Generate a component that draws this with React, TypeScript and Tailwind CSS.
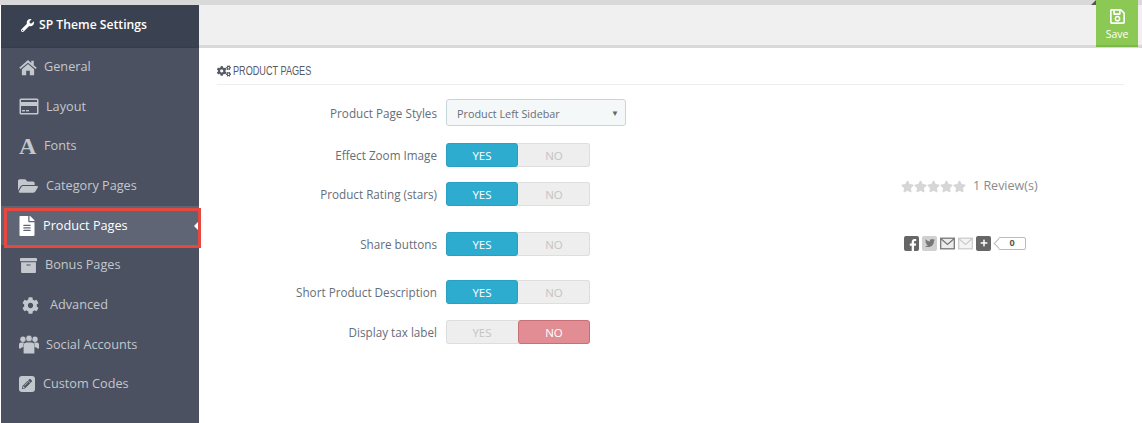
import React from "react";
import { FaArchive, FaCog, FaCogs, FaFacebookF, FaFileAlt, FaFolderOpen, FaPencilAlt, FaPlus, FaRegSave, FaStar, FaTwitter, FaWrench } from "react-icons/fa";

type NavItem = {
  label: string;
  icon: React.ReactNode;
  iconBox: string;
  rowClass: string;
  active?: boolean;
};

function HomeIcon() {
  return (
    <svg width="18" height="17" viewBox="0 0 20 18" fill="currentColor" className="ml-[18px]">
      <path d="M10 0.8 L0.3 9.3 L1.6 10.8 L10 3.6 L18.4 10.8 L19.7 9.3 L16.4 6.4 V1.6 H13.6 V4 Z" />
      <path d="M10 5.2 L3.2 11 V17.6 H8 V12.6 H12 V17.6 H16.8 V11 Z" />
    </svg>
  );
}

function CardIcon() {
  return (
    <svg width="20" height="17" viewBox="0 0 20 17" fill="currentColor" className="ml-[18px]">
      <path fillRule="evenodd" d="M2 0.5 H18 Q19.5 0.5 19.5 2 V15 Q19.5 16.5 18 16.5 H2 Q0.5 16.5 0.5 15 V2 Q0.5 0.5 2 0.5 Z M2 2 V4 H18 V2 Z M2 8 V15 H18 V8 Z" />
      <rect x="3" y="12" width="3" height="1.4" />
      <rect x="7" y="12" width="3" height="1.4" />
    </svg>
  );
}

function UsersIcon() {
  return (
    <svg width="20" height="19" viewBox="0 0 20 19" fill="currentColor" className="ml-[18px]">
      <circle cx="4" cy="4.2" r="2.7" />
      <circle cx="16" cy="4.2" r="2.7" />
      <circle cx="10" cy="3.4" r="3.2" stroke="#4b5160" strokeWidth="0.6" />
      <path d="M0 13.5 V9.5 Q0 7.5 2 7.5 H5 Q4.2 9 4.4 12 Q2 12.4 1.8 13.5 Z" />
      <path d="M20 13.5 V9.5 Q20 7.5 18 7.5 H15 Q15.8 9 15.6 12 Q18 12.4 18.2 13.5 Z" />
      <path d="M4.6 18.5 V11 Q4.6 7.6 7.6 7.6 H12.4 Q15.4 7.6 15.4 11 V18.5 Z" />
    </svg>
  );
}

function PenBoxIcon() {
  return (
    <span className="ml-[18px] flex h-[16px] w-[16px] items-center justify-center rounded-[3px] bg-[#c3c7ce] text-[#4b5160]">
      <FaPencilAlt size={10} />
    </span>
  );
}

const nav: NavItem[] = [
  { label: "General", icon: <HomeIcon />, iconBox: "w-[43px]", rowClass: "h-[40px]" },
  { label: "Layout", icon: <CardIcon />, iconBox: "w-[45px]", rowClass: "h-[39px]" },
  { label: "Fonts", icon: <span aria-hidden className="ml-[18px] font-['Liberation_Serif',serif] text-[24px] font-bold leading-none">A</span>, iconBox: "w-[43px]", rowClass: "h-[40px]" },
  { label: "Category Pages", icon: <FaFolderOpen size={20} className="ml-[17px]" />, iconBox: "w-[45px]", rowClass: "h-[40px]" },
  { label: "Product Pages", icon: <FaFileAlt size={20} className="ml-[16px]" />, iconBox: "w-[42px]", rowClass: "h-[39px]", active: true },
  { label: "Bonus Pages", icon: <FaArchive size={17} className="ml-[19px]" />, iconBox: "w-[44px]", rowClass: "h-[40px]" },
  { label: "Advanced", icon: <FaCog size={17} className="ml-[21px]" />, iconBox: "w-[49px]", rowClass: "h-[40px]" },
  { label: "Social Accounts", icon: <UsersIcon />, iconBox: "w-[45px]", rowClass: "h-[39px]" },
  { label: "Custom Codes", icon: <PenBoxIcon />, iconBox: "w-[42px]", rowClass: "h-[40px]" },
];

function Toggle({ on }: { on: boolean }) {
  return (
    <div className="flex h-[24px] w-[144px] rounded-[3px] bg-[#eeeeee] text-[11.5px] font-medium shadow-[inset_0_0_0_1px_#dedede]">
      <div className={on ? "flex w-[72px] items-center justify-center rounded-[3px] border border-[#27a0c2] bg-[#2eaccf] pt-[1px] text-white" : "flex w-[72px] items-center justify-center pt-[1px] text-[#c4c4c4]"}>YES</div>
      <div className={on ? "flex w-[72px] items-center justify-center pt-[1px] text-[#c4c4c4]" : "flex w-[72px] items-center justify-center rounded-[3px] border border-[#c87078] bg-[#e28d93] pt-[1px] text-white"}>NO</div>
    </div>
  );
}

function Row({ label, className, children, side }: { label: string; className: string; children: React.ReactNode; side?: React.ReactNode }) {
  return (
    <div className={`flex items-center ${className}`}>
      <div className="w-[220px] pt-[2px] text-right text-[11.7px] text-[#666e78]">{label}</div>
      <div className="ml-[9px] w-[455px]">{children}</div>
      {side}
    </div>
  );
}

function Tile({ className, children }: { className: string; children: React.ReactNode }) {
  return <span className={`flex h-[15px] w-[15px] items-center justify-center overflow-hidden rounded-[2px] ${className}`}>{children}</span>;
}

function MailTile({ flap, body }: { flap: string; body: string }) {
  return (
    <svg width="15" height="15" viewBox="0 0 15 15" fill="none" stroke={flap} strokeWidth="1.3">
      <rect x="0.7" y="2.2" width="13.6" height="10.6" fill={body} />
      <path d="M1 2.8 L7.5 8.4 L14 2.8" />
    </svg>
  );
}

export default function App() {
  return (
    <div className="h-[423px] w-[1142px] overflow-hidden bg-white font-['Open_Sans',sans-serif]">
      <div className="relative h-[5px] bg-[#d9d9d9]">
        <div className="absolute right-[46px] top-0 h-0 w-0 border-b-[5px] border-l-[5px] border-b-[#555555] border-l-transparent" />
      </div>
      <div className="flex h-[418px]">
        <div className="ml-[1px] h-full w-[198px] bg-[#4b5160]">
          <div className="flex h-[43px] items-center border-b border-[#363c49] bg-[#3a4150] pb-[2px] pl-[20px] text-[12.2px] font-semibold text-white">
            <FaWrench size={13} />
            <span className="ml-[5px]">SP Theme Settings</span>
          </div>
          <div className="-mt-[1px]">
            {nav.map((item) => (
              <div key={item.label} className={`relative flex items-center text-[12.7px] ${item.rowClass} ${item.active ? "bg-[#5f6575] text-white" : "text-[#c3c7ce]"}`}>
                <span className={`flex shrink-0 items-center ${item.iconBox}`}>{item.icon}</span>
                <span>{item.label}</span>
                {item.active && (
                  <>
                    <div className="absolute right-0 top-1/2 -mt-[5px] h-0 w-0 border-y-[5px] border-r-[5px] border-y-transparent border-r-white" />
                    <div className="absolute -right-[2px] left-[3px] top-[2px] bottom-[-3px] border-[3px] border-[#e5483f]" />
                  </>
                )}
              </div>
            ))}
          </div>
        </div>

        <div className="min-w-0 flex-1">
          <div className="flex h-[43px] justify-end border-b-[3px] border-[#d9d9d9] bg-[#f0f0f0] pr-[4px]">
            <div className="z-10 -mt-[5px] flex h-[47px] w-[42px] flex-col items-center border-b-[2px] border-[#7eb84a] bg-[#8bc954] pt-[8px] text-[10.5px] text-white">
              <FaRegSave size={17} />
              <span className="mt-[2px]">Save</span>
            </div>
          </div>

          <div className="px-[18px]">
            <div className="flex h-[37px] w-[907px] items-center border-b border-[#eeeeee] pt-[10px] text-[#555b64]">
              <FaCogs size={14} />
              <span className="ml-[2px] origin-left scale-x-[0.73] pt-[1px] font-['Liberation_Sans',sans-serif] text-[12.5px]">PRODUCT PAGES</span>
            </div>

            <div className="pt-[14px]">
              <Row label="Product Page Styles" className="mb-[17px] h-[27px]">
                <div className="flex h-[27px] w-[180px] items-center justify-between rounded-[3px] border border-[#c5d6da] bg-[#f4f8f9] pl-[10px] pr-[6px] pt-[3px] text-[10.8px] text-[#666e78]">
                  <span>Product Left Sidebar</span>
                  <span className="pb-[3px] text-[8px] text-[#666666]">▼</span>
                </div>
              </Row>
              <Row label="Effect Zoom Image" className="mb-[15px] h-[24px]">
                <Toggle on />
              </Row>
              <Row
                label="Product Rating (stars)"
                className="mb-[26px] h-[24px]"
                side={
                  <div className="mb-[16px] flex items-center text-[12.5px] text-[#8a8a8a]">
                    <div className="flex text-[#d6d6d6]">
                      {[0, 1, 2, 3, 4].map((i) => (
                        <FaStar key={i} size={13} />
                      ))}
                    </div>
                    <span className="ml-[7px]">1 Review(s)</span>
                  </div>
                }
              >
                <Toggle on />
              </Row>
              <Row
                label="Share buttons"
                className="mb-[24px] h-[24px]"
                side={
                  <div className="ml-[3px] mb-[2px] flex items-center gap-[3px]">
                    <Tile className="bg-[#666666] text-white"><FaFacebookF size={12} className="mt-[3px] ml-[2px]" /></Tile>
                    <Tile className="bg-[#d0d0d0] text-[#777777]"><FaTwitter size={10} /></Tile>
                    <MailTile flap="#777777" body="#ececec" />
                    <MailTile flap="#cccccc" body="#f4f4f4" />
                    <Tile className="bg-[#666666] text-white"><FaPlus size={8} /></Tile>
                    <div className="relative ml-[4px] flex h-[13px] w-[28px] items-center justify-center rounded-[2px] border border-[#bbbbbb] text-[9px] font-bold text-[#555555]">
                      0
                      <span className="absolute -left-[4px] top-[2px] h-[7px] w-[7px] rotate-45 border-b border-l border-[#bbbbbb] bg-white" />
                    </div>
                  </div>
                }
              >
                <Toggle on />
              </Row>
              <Row label="Short Product Description" className="mb-[16px] h-[24px]">
                <Toggle on />
              </Row>
              <Row label="Display tax label" className="h-[24px]">
                <Toggle on={false} />
              </Row>
            </div>
          </div>
        </div>
      </div>
    </div>
  );
}
